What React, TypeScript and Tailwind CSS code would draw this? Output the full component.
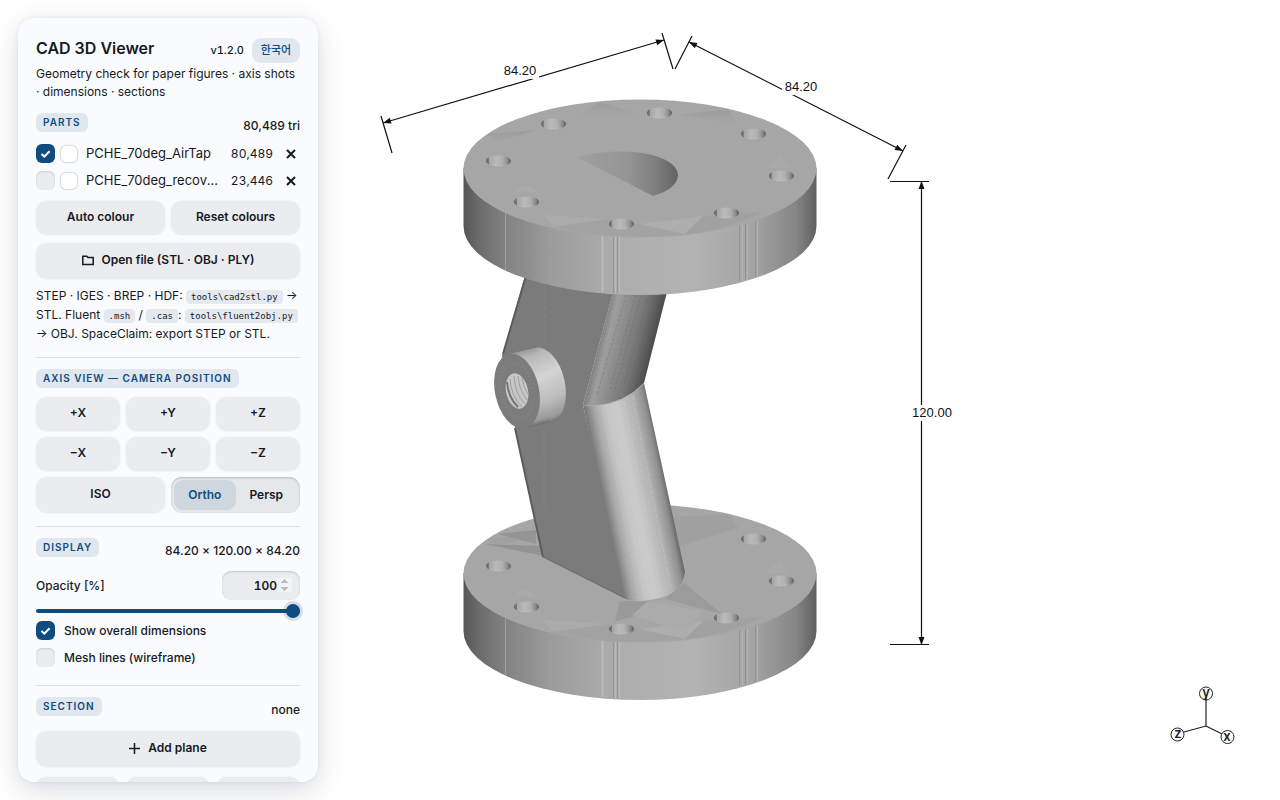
import { useState } from 'react';
import type { ReactNode } from 'react';
import { clsx } from 'clsx';

interface Part {
  id: string;
  name: string;
  triangles: string;
  visible: boolean;
}

const initialParts: Part[] = [
  { id: 'airtap', name: 'PCHE_70deg_AirTap', triangles: '80,489', visible: true },
  { id: 'recovery', name: 'PCHE_70deg_recovery', triangles: '23,446', visible: false },
];

const axisViews = ['+X', '+Y', '+Z', '−X', '−Y', '−Z'];

const holes = [
  [553, 124],
  [659, 113],
  [753, 134],
  [781, 176],
  [726, 213],
  [621, 224],
  [526, 202],
  [498, 161],
];

function CheckBox({ id, checked, label, onChange }: { id: string; checked: boolean; label?: string; onChange: () => void }) {
  return (
    <span className="relative block h-[19px] w-[19px] shrink-0">
      <input
        id={id}
        type="checkbox"
        checked={checked}
        aria-label={label}
        onChange={onChange}
        className="block h-[19px] w-[19px] appearance-none rounded-[6px] bg-[#ebecf0] shadow-[inset_0_1px_2px_rgba(30,40,60,0.16)] checked:bg-[#0f4c81]"
      />
      {checked && (
        <svg viewBox="0 0 19 19" className="pointer-events-none absolute inset-0" fill="none" stroke="white" strokeWidth="2">
          <path d="M5.500 10 8.300 12.700 13.600 7.200" />
        </svg>
      )}
    </span>
  );
}

function Button({ children, label, tall, onClick }: { children?: ReactNode; label?: string; tall?: boolean; onClick?: () => void }) {
  return (
    <button
      type="button"
      aria-label={label}
      onClick={onClick}
      className={clsx(
        'flex w-full items-center justify-center gap-2 rounded-[11px] bg-[#ebecf0] pb-0.5 text-[12px] font-semibold shadow-[0_0_1px_1px_rgba(30,40,60,0.03)] hover:bg-[#e2e4e9]',
        tall ? 'h-9' : 'h-[34px]'
      )}
    >
      {children}
    </button>
  );
}

function SectionHead({ title, value }: { title: string; value?: string }) {
  return (
    <div className={clsx('flex justify-between', value ? 'h-[22px]' : 'h-[19px]')}>
      <h2 className="h-[19px] self-start rounded-[6px] bg-[#e0e7ef] px-[7px] text-[10px] leading-[18px] font-semibold tracking-widest text-[#0f4c81] uppercase">
        {title}
      </h2>
      {value && <span className="self-end text-[12px] leading-[18px] font-medium">{value}</span>}
    </div>
  );
}

function Code({ children }: { children: ReactNode }) {
  return (
    <code className="rounded-[4px] bg-[#e4e8ef] px-[5px] py-0.5 font-['DejaVu_Sans_Mono',monospace] text-[9px] leading-none">{children}</code>
  );
}

function Arrow({ x, y, angle }: { x: number; y: number; angle: number }) {
  return <path d="M0 0 -8 -3 -8 3Z" fill="#111" transform={`translate(${x} ${y}) rotate(${angle})`} />;
}

function DimensionText({ x, y, half, children }: { x: number; y: number; half: number; children: string }) {
  return (
    <g>
      <rect x={x - half} y={y - 8} width={half * 2} height={16} fill="white" />
      <text x={x} y={y + 4} textAnchor="middle" fontSize="13" fill="#111" className="font-['Liberation_Sans',sans-serif]">
        {children}
      </text>
    </g>
  );
}

function Flange() {
  return (
    <g>
      <path d="M463.500 168V226A176.500 69 0 0 0 816.500 226V168Z" fill="url(#side)" />
      <g strokeWidth="1">
        <path d="M505.500 212V270" stroke="#a0a0a0" />
        <path d="M602.500 236V292" stroke="#bcbcbc" strokeWidth="2" />
        <path d="M613.500 237V293M617.500 237V293" stroke="#959595" />
        <path d="M615.500 237V293M619.500 237V293" stroke="#bababa" />
        <path d="M739.500 225V281M745.500 224V280M755.500 221V277" stroke="#939393" />
        <path d="M742.500 225V281M747.500 224V280M757.500 221V277" stroke="#b2b2b2" />
      </g>
      <ellipse cx="640" cy="168.500" rx="176.500" ry="69" fill="#a6a6a6" />
      <path d="M577 116 600 102 640 114Z" fill="url(#facetDark)" />
      <path d="M680 115 728 109 738 124Z" fill="url(#facetDark)" />
      <path d="M487 134 536 130 495 143Z" fill="url(#facetDark)" />
      <path d="M543 215 608 219 554 227Z" fill="#ababab" />
      <path d="M641 224 703 216 685 234Z" fill="#aeaeae" />
      <path d="M703 216 685 234Q722 231 764 212Z" fill="#a1a1a1" />
      <path d="M554 227 608 219 685 234Q610 241 554 227Z" fill="#a2a2a2" />
      <path d="M764 169 780 155 790 168Z" fill="#a9a9a9" />
      <path d="M515 191 523 184 541 193Z" fill="#aaaaaa" />
      {holes.map(([x, y]) => (
        <g key={x}>
          <ellipse cx={x + 0.5} cy={y} rx="12.500" ry="5.500" fill="url(#hole)" />
          <path d={`M${x - 9} ${y + 3}Q${x} ${y + 7} ${x + 10} ${y + 3}Q${x} ${y + 5} ${x - 9} ${y + 3}Z`} fill="#bababa" />
        </g>
      ))}
    </g>
  );
}

function ModelView() {
  return (
    <svg viewBox="0 0 1280 800" className="absolute inset-0 h-full w-full" role="img" aria-label="3D model with overall dimensions">
      <defs>
        <linearGradient id="side">
          <stop offset="0" stopColor="#555" />
          <stop offset="0.04" stopColor="#6a6a6a" />
          <stop offset="0.12" stopColor="#828282" />
          <stop offset="0.25" stopColor="#9c9c9c" />
          <stop offset="0.45" stopColor="#aeaeae" />
          <stop offset="0.65" stopColor="#b3b3b3" />
          <stop offset="0.82" stopColor="#a4a4a4" />
          <stop offset="0.94" stopColor="#868686" />
          <stop offset="1" stopColor="#606060" />
        </linearGradient>
        <linearGradient id="hole">
          <stop offset="0" stopColor="#606060" />
          <stop offset="0.1" stopColor="#7a7a7a" />
          <stop offset="0.13" stopColor="#a6a6a6" />
          <stop offset="0.4" stopColor="#bababa" />
          <stop offset="0.65" stopColor="#b0b0b0" />
          <stop offset="0.85" stopColor="#8e8e8e" />
          <stop offset="1" stopColor="#5c5c5c" />
        </linearGradient>
        <linearGradient id="facetDark" x1="0" y1="0" x2="0" y2="1">
          <stop offset="0" stopColor="#9c9c9c" />
          <stop offset="1" stopColor="#a6a6a6" />
        </linearGradient>
        <linearGradient id="port">
          <stop offset="0" stopColor="#a0a0a0" />
          <stop offset="0.5" stopColor="#959595" />
          <stop offset="0.8" stopColor="#7c7c7c" />
          <stop offset="1" stopColor="#636363" />
        </linearGradient>
        <linearGradient id="upperPipe" gradientUnits="userSpaceOnUse" x1="596" y1="350" x2="649" y2="363">
          <stop offset="0" stopColor="#7b7b7b" />
          <stop offset="0.16" stopColor="#9e9e9e" />
          <stop offset="0.4" stopColor="#8b8b8b" />
          <stop offset="0.7" stopColor="#757575" />
          <stop offset="1" stopColor="#4c4c4c" />
        </linearGradient>
        <linearGradient id="lowerPipe" gradientUnits="userSpaceOnUse" x1="602" y1="490" x2="665" y2="477">
          <stop offset="0" stopColor="#7b7b7b" />
          <stop offset="0.14" stopColor="#a8a8a8" />
          <stop offset="0.32" stopColor="#c6c6c6" />
          <stop offset="0.5" stopColor="#cacaca" />
          <stop offset="0.75" stopColor="#b3b3b3" />
          <stop offset="0.92" stopColor="#8f8f8f" />
          <stop offset="1" stopColor="#696969" />
        </linearGradient>
        <linearGradient id="boss" gradientUnits="userSpaceOnUse" x1="528" y1="347" x2="548" y2="426">
          <stop offset="0" stopColor="#909090" />
          <stop offset="0.12" stopColor="#b8b8b8" />
          <stop offset="0.4" stopColor="#d4d4d4" />
          <stop offset="0.7" stopColor="#bcbcbc" />
          <stop offset="0.9" stopColor="#999" />
          <stop offset="1" stopColor="#505050" />
        </linearGradient>
      </defs>

      {/* lower flange */}
      <g transform="translate(0 405)">
        <Flange />
        <path d="M497 129 536 125V139Z" fill="#959595" />
        <path d="M485 139 544 151 542 141Z" fill="#929292" />
        <path d="M670 112 730 109 738 123 680 141Z" fill="#a0a0a0" />
        <path d="M620 196 648 196 633 212 615 216Z" fill="#9a9a9a" />
        <path d="M684 178 722 209 665 194Z" fill="#9b9b9b" />
        <path d="M648 196 703 206 685 227 632 210Z" fill="#ababab" />
      </g>

      {/* bent pipe */}
      <path d="M526 272H620L612 296 583 405 628 600 543 557 515 428 502 356Z" fill="#7b7b7b" />
      <path d="M526 276 503 354M515 428 543 557" stroke="#5c5c5c" strokeWidth="2" />
      <path d="M545 285V345M544 430V510" stroke="#858585" strokeDasharray="5 2" />
      <path d="M543 557 625 598" stroke="#6b6b6b" />
      <path d="M614 288H668L644 383Q625 404 592 406L583 405Z" fill="url(#upperPipe)" />
      <path d="M626 295 597 395M636 295 610 390M641 295 614 392M649 295 624 385M656 295 631 380" stroke="#666" strokeDasharray="3 2" strokeWidth="1" opacity="0.4" />
      <path d="M583 405 592 406Q625 404 644 383L685 572Q682 599 640 601 633 602 625 598Z" fill="url(#lowerPipe)" />
      <path d="M602 407 639 598M613 405 651 597M624 402 661 592M633 396 671 588" stroke="#ddd" strokeDasharray="4 2" opacity="0.3" />
      <path d="M592 406Q625 404 644 383" fill="none" stroke="#aaa" />

      {/* threaded tap */}
      <ellipse cx="543" cy="385" rx="22" ry="38" transform="rotate(-12 543 385)" fill="url(#boss)" />
      <path d="M509 354 535 348 551 422 525 428Z" fill="url(#boss)" />
      <ellipse cx="517" cy="391" rx="22" ry="38" transform="rotate(-12 517 391)" fill="#7c7c7c" />
      <ellipse cx="517" cy="391" rx="16" ry="28" transform="rotate(-12 517 391)" fill="none" stroke="#858585" strokeDasharray="1 3" strokeWidth="3" />
      <ellipse cx="517" cy="391" rx="11" ry="18" transform="rotate(-12 517 391)" fill="#c6c6c6" />
      <g fill="none" stroke="#a0a0a0">
        <path d="M507 382Q508 397 518 407" stroke="#757575" strokeWidth="2" />
        <path d="M510 379Q511 396 522 407M514 376Q515 394 525 404M518 376Q519 390 527 400M522 378Q523 387 528 394" />
      </g>

      {/* upper flange */}
      <Flange />
      <path d="M577 157Q601 151 624 151.500C657 152 678 163 678 175 678 184 668 192 653 196Z" fill="url(#port)" />

      {/* overall dimensions */}
      <g stroke="#111" strokeWidth="1.200" fill="none">
        <path d="M383 123 664 40M381 116 392 153M662 33 673 69" />
        <path d="M689 42 903 151M692 36 675 69M906 145 888 179" />
        <path d="M921.500 182V644M890 181.500H929M890 644.500H929" />
      </g>
      <Arrow x={383} y={123} angle={163} />
      <Arrow x={664} y={40} angle={-17} />
      <Arrow x={689} y={42} angle={207} />
      <Arrow x={903} y={151} angle={27} />
      <Arrow x={921.5} y={181} angle={-90} />
      <Arrow x={921.5} y={645} angle={90} />
      <DimensionText x={520} y={71} half={19}>84.20</DimensionText>
      <DimensionText x={801} y={87} half={19}>84.20</DimensionText>
      <DimensionText x={932} y={413} half={22}>120.00</DimensionText>
    </svg>
  );
}

function AxisGizmo() {
  return (
    <svg width="70" height="66" viewBox="1168 684 70 66" className="absolute right-[42px] bottom-[50px]" role="img" aria-label="Axis orientation">
      <path d="M1206 726V697M1206 726 1184 732M1206 726 1222 734" stroke="#222" strokeWidth="1.200" />
      <g fill="none" stroke="#222">
        <circle cx="1206" cy="693.500" r="6.500" />
        <circle cx="1177.500" cy="734.500" r="6.500" />
        <circle cx="1227.500" cy="737" r="6.500" />
      </g>
      <g fontSize="13" fontWeight="600" fill="#222" textAnchor="middle" className="font-['Inter',sans-serif]">
        <text x="1206" y="697">y</text>
        <text x="1178" y="738">z</text>
        <text x="1227" y="741">x</text>
      </g>
    </svg>
  );
}

export default function App() {
  const [parts, setParts] = useState(initialParts);
  const [projection, setProjection] = useState('Ortho');
  const [opacity, setOpacity] = useState(100);
  const [showDimensions, setShowDimensions] = useState(true);
  const [wireframe, setWireframe] = useState(false);

  const toggle = (id: string) => {
    setParts((prev) => prev.map((p) => (p.id === id ? { ...p, visible: !p.visible } : p)));
  };

  return (
    <div className="relative h-screen overflow-hidden bg-white p-[18px] font-['Inter','Noto_Sans_CJK_KR',sans-serif] text-[#16191f]">
      <ModelView />
      <AxisGizmo />

      <aside className="relative h-full w-[300px] overflow-hidden rounded-[16px] bg-[#fafbfd] px-[18px] pt-5 shadow-[0_8px_28px_rgba(20,30,50,0.16),0_0_4px_rgba(20,30,50,0.08)]">
        <header>
          <div className="flex h-[25px] items-center">
            <h1 className="mb-1.5 flex-1 text-[16px] font-semibold">CAD 3D Viewer</h1>
            <span className="mr-2 text-[11px] font-medium tabular-nums">v1.2.0</span>
            <button type="button" className="h-[25px] w-12 rounded-[9px] bg-[#e0e7ef] text-[11px] font-medium text-[#0f4c81]">
              한국어
            </button>
          </div>
          <p className="mt-0.5 text-[12px] leading-[18px]">Geometry check for paper figures · axis shots · dimensions · sections</p>
        </header>

        <section className="mt-3">
          <SectionHead title="Parts" value="80,489 tri" />
          <ul className="mt-[5px]">
            {parts.map((part) => (
              <li key={part.id} className="flex h-[27px] items-center">
                <CheckBox id={part.id} label={part.name} checked={part.visible} onChange={() => toggle(part.id)} />
                <button
                  type="button"
                  aria-label={`Colour of ${part.name}`}
                  className="ml-1.5 h-4 w-4 shrink-0 rounded-[5px] bg-white shadow-[0_0_1px_1px_rgba(30,40,60,0.16)]"
                />
                <span className="ml-[9px] min-w-0 flex-1 truncate text-[13px]">{part.name}</span>
                <span className="ml-3 text-[12px] tabular-nums">{part.triangles}</span>
                <button type="button" aria-label={`Remove ${part.name}`} className="ml-[9px] flex h-[18px] w-[18px] items-center justify-center">
                  <svg width="10" height="10" viewBox="0 0 10 10" stroke="currentColor" strokeWidth="2">
                    <path d="M1 1 9 9M9 1 1 9" />
                  </svg>
                </button>
              </li>
            ))}
          </ul>
          <div className="mt-[7px] grid grid-cols-2 gap-1.5">
            <Button>Auto colour</Button>
            <Button>Reset colours</Button>
          </div>
          <div className="mt-2">
            <Button tall>
              <svg width="12" height="12" viewBox="0 0 12 12" fill="none" stroke="currentColor" strokeWidth="1.500">
                <path d="M.8 2.300H4.800L6 3.600H11.200V10.500H.8Z" />
              </svg>
              Open file (STL · OBJ · PLY)
            </Button>
          </div>
          <p className="mt-[7px] text-[12px] leading-[19px]">
            STEP · IGES · BREP · HDF: <Code>tools\cad2stl.py</Code> → STL. Fluent <Code>.msh</Code> / <Code>.cas</Code>:{' '}
            <Code>tools\fluent2obj.py</Code> → OBJ. SpaceClaim: export STEP or STL.
          </p>
        </section>

        <section className="mt-[14px] border-t border-[#dcdfe4] pt-[11px]">
          <SectionHead title="Axis view — camera position" />
          <div className="mt-[9px] grid grid-cols-3 gap-1.5">
            {axisViews.map((view) => (
              <Button key={view}>{view}</Button>
            ))}
          </div>
          <div className="mt-1.5 grid grid-cols-2 gap-1.5">
            <Button tall>ISO</Button>
            <div className="flex h-9 rounded-[11px] bg-[#e5e8eb] p-[3px] shadow-[inset_0_1px_2px_rgba(30,60,80,0.25)]">
              {['Ortho', 'Persp'].map((mode) => (
                <button
                  key={mode}
                  type="button"
                  aria-pressed={projection === mode}
                  onClick={() => setProjection(mode)}
                  className={clsx(
                    'flex-1 rounded-[9px] text-[12px] font-semibold',
                    projection === mode && 'bg-[#cfd7de] text-[#0f4c81]'
                  )}
                >
                  {mode}
                </button>
              ))}
            </div>
          </div>
        </section>

        <section className="mt-[13px] border-t border-[#dcdfe4] pt-[11px]">
          <SectionHead title="Display" value="84.20 × 120.00 × 84.20" />
          <div className="mt-[11px] flex h-[29px] items-center justify-between">
            <label htmlFor="opacity" className="text-[12px] font-medium">Opacity [%]</label>
            <input
              id="opacity"
              type="number"
              min={0}
              max={100}
              value={opacity}
              onChange={(e) => setOpacity(Number(e.target.value))}
              className="h-[29px] w-[78px] rounded-[9px] bg-[#ebecf0] pr-2 text-right text-[12px] font-semibold tabular-nums shadow-[inset_0_1px_2px_rgba(30,40,60,0.2)] [&::-webkit-inner-spin-button]:opacity-50"
            />
          </div>
          <input
            type="range"
            aria-label="Opacity"
            min={0}
            max={100}
            value={opacity}
            onChange={(e) => setOpacity(Number(e.target.value))}
            className="mt-[9px] block h-1 w-full appearance-none rounded-full bg-[#0f4c81] [&::-webkit-slider-thumb]:h-[14px] [&::-webkit-slider-thumb]:w-[14px] [&::-webkit-slider-thumb]:appearance-none [&::-webkit-slider-thumb]:rounded-full [&::-webkit-slider-thumb]:bg-[#0f4c81] [&::-webkit-slider-thumb]:shadow-[0_0_0_3px_rgba(15,76,129,0.16)]"
          />
          <div className="mt-1 flex h-[27px] items-center gap-[9px]">
            <CheckBox id="dimensions" checked={showDimensions} onChange={() => setShowDimensions(!showDimensions)} />
            <label htmlFor="dimensions" className="text-[12px] font-medium">Show overall dimensions</label>
          </div>
          <div className="flex h-[27px] items-center gap-[9px]">
            <CheckBox id="wireframe" checked={wireframe} onChange={() => setWireframe(!wireframe)} />
            <label htmlFor="wireframe" className="text-[12px] font-medium">Mesh lines (wireframe)</label>
          </div>
        </section>

        <section className="mt-[14px] border-t border-[#dcdfe4] pt-[11px]">
          <SectionHead title="Section" value="none" />
          <div className="mt-3">
            <Button tall>
              <svg width="11" height="11" viewBox="0 0 11 11" stroke="currentColor" strokeWidth="1.500">
                <path d="M5.500 0V11M0 5.500H11" />
              </svg>
              Add plane
            </Button>
          </div>
          <div className="mt-[10px] grid grid-cols-3 gap-1.5">
            <Button label="Plane X" />
            <Button label="Plane Y" />
            <Button label="Plane Z" />
          </div>
        </section>
      </aside>
    </div>
  );
}
